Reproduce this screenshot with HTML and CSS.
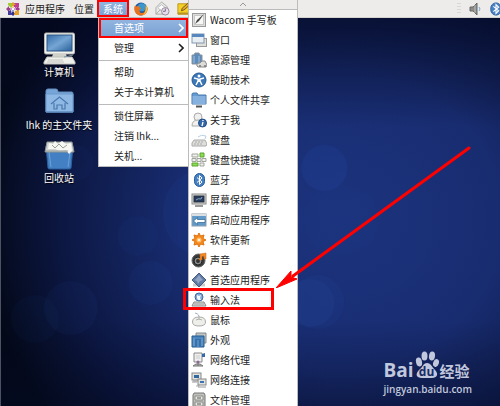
FILE: index.html
```html
<!DOCTYPE html>
<html lang="zh-CN">
<head>
<meta charset="utf-8">
<title>桌面</title>
<link rel="stylesheet" href="styles.css">
</head>
<body>
<header class="panel">
  <nav class="panel-menus">
    <svg class="distro" viewBox="0 0 16 16" width="16" height="16" aria-hidden="true">
      <g fill="#9b3c8e"><path d="M1 8l3-3v2h3v2H4v2z"/><rect x="9" y="2" width="4" height="4" fill="#b04896"/></g>
      <path d="M8 1l3 3H9v3H7V4H5z" fill="#e0a125"/>
      <path d="M15 8l-3 3V9H9V7h3V5z" fill="#a33b93"/>
      <path d="M8 15l-3-3h2V9h2v3h2z" fill="#33318c"/>
      <path d="M3 2h4v4l-1 1-3-3z" fill="#a5c936"/><path d="M10 7V5l2-3h2v4z" fill="#c53d8e"/>
      <path d="M3 14v-4l3-1 1 5z" fill="#453b9b"/><path d="M10 10l4-1v5H9z" fill="#e5a228"/>
      <path d="M8 5v6M5 8h6" stroke="#fff"/>
    </svg>
    <button class="panel-button">应用程序</button>
    <button class="panel-button">位置</button>
    <button class="panel-button active marked">系统</button>
  </nav>
  <div class="launchers">
    <svg viewBox="0 0 16 16" width="14" height="14" aria-hidden="true">
      <circle cx="8" cy="8" r="7.3" fill="#245a9c"/><circle cx="9" cy="6" r="4.5" fill="#3b97d0"/>
      <path d="M1 4l2 1 2-1 1 2 2 1-2 2 1 3c4 2 6-1 6-4l1-4c3 5 1 11-6 11.500C2 15-1 10 1 4z" fill="#e8731c"/>
      <path d="M14 4c3 5 0 10-4 11 3-3 4-7 3-11z" fill="#f7bd36"/>
    </svg>
    <svg viewBox="0 0 16 16" width="15" height="15" aria-hidden="true">
      <path d="M1 7l6-6 6 5v8H1z" fill="#e9e9e7" stroke="#aaa"/><path d="M3 7l4-3 4 3-4 4z" fill="#fff" stroke="#bbb"/>
      <path d="M1 14l5-5" stroke="#aaa"/><circle cx="11" cy="11" r="4" fill="#e5dfe9" stroke="#9685a2"/><path d="M11 8v3H8.500" fill="none" stroke="#756582"/>
    </svg>
    <svg viewBox="0 0 16 16" width="14" height="14" aria-hidden="true">
      <path d="M1 2h14v12H1z" fill="#f4cf24" stroke="#b79310"/><path d="M1 12h14v2H1z" fill="#b69524"/><path d="M5 10l1-3 7-6 2 2-7 6z" fill="#e9a72d" stroke="#665225"/>
    </svg>
  </div>
  <div class="tray">
    <span class="grip"></span>
    <svg viewBox="0 0 14 14" width="14" height="14" aria-hidden="true">
      <path d="M2 5h3l4-4v12L5 9H2z" fill="#8b8c88" stroke="#686966"/><path d="M7 3v8" stroke="#bbb"/><path d="M11 5q2 2 0 4" fill="none" stroke="#75a6d8"/>
    </svg>
    <svg viewBox="0 0 16 16" width="14" height="14" aria-hidden="true">
      <rect x="2" y="1" width="12" height="14" rx="6" fill="#4882c5" stroke="#2d619f"/><path d="M5 5l6 5-3 3V3l3 3-6 5" fill="none" stroke="#fff" stroke-width="1.300"/>
    </svg>
  </div>
</header>

<main class="desktop">
  <svg class="bubbles" viewBox="0 0 500 388" preserveAspectRatio="none" aria-hidden="true">
    <g fill="#315fc6">
      <circle cx="324" cy="150" r="23" opacity=".13"/><circle cx="137" cy="218" r="20" opacity=".05"/>
      <circle cx="150" cy="265" r="22" opacity=".07"/><circle cx="70" cy="290" r="27" opacity=".06"/>
      <circle cx="34" cy="301" r="24" opacity=".04"/><circle cx="310" cy="285" r="24" opacity=".1"/>
      <circle cx="317" cy="284" r="27" opacity=".06"/><circle cx="206" cy="195" r="44" opacity=".07"/>
      <circle cx="75" cy="145" r="18" opacity=".04"/>
    </g>
  </svg>
  <div class="shortcuts">
    <a class="shortcut" href="#computer">
      <svg viewBox="0 0 33 33" width="33" height="33" aria-hidden="true">
        <defs><linearGradient id="screen" x2="1" y2="1"><stop stop-color="#356da9"/><stop offset=".5" stop-color="#75a5d4"/><stop offset="1" stop-color="#286099"/></linearGradient></defs>
        <rect x="1.500" y="1" width="30" height="21" rx="1.500" fill="#f2f2ed" stroke="#b8b9b3"/>
        <rect x="4" y="3" width="25" height="16" fill="url(#screen)" stroke="#2a5484"/>
        <path d="M10 22h13l1 3H9z" fill="#d0d1cb"/><path d="M4 25h25l3 5v2H1v-2z" fill="#f0f0eb" stroke="#bfc0ba"/>
        <path d="M5 28h15M4 30h17" stroke="#c3c4bf"/><path d="M21 25q5-1 9-2" fill="none" stroke="#78909f"/>
      </svg>
      <span>计算机</span>
    </a>
    <a class="shortcut" href="#home">
      <svg viewBox="0 0 33 33" width="33" height="33" aria-hidden="true">
        <path d="M3 27V6q0-2 2-2h8q2 0 2 3h14q1 0 1 2v18z" fill="#78a5d7" stroke="#648fc2"/>
        <path d="M3 9h27v18H3z" fill="#8fb8e4" stroke="#6b9acd"/><path d="M3 27h27" stroke="#5683b8"/>
        <path d="M8 19l8.500-7 8.500 7M11 18v6h3v-4h5v4h3v-6" fill="none" stroke="#4878ad" stroke-width="1.200"/>
      </svg>
      <span>lhk 的主文件夹</span>
    </a>
    <a class="shortcut" href="#trash">
      <svg viewBox="0 0 33 33" width="33" height="33" aria-hidden="true">
        <path d="M3 8h27l-2 22q0 1-2 1H7q-2 0-2-1z" fill="#4380c3" stroke="#2b5e9d"/><path d="M6 14l2 15M27 14l-2 15" stroke="#6da0d6"/>
        <path d="M4 4h25l2 10H2z" fill="#ced3d2" stroke="#8d9594"/><path d="M5 11l1-6 4 1 2-3 3 3 4-3 4 3 5-1 1 8-3 3-3-4-6 1-5-2z" fill="#f6f6f3"/>
        <path d="M9 7l3 3 4-4 4 4 4-3M3 13h22" fill="none" stroke="#989f9b"/>
      </svg>
      <span>回收站</span>
    </a>
  </div>
  <div class="watermark">
    <div class="logo">
      <span class="brand">Bai</span>
      <span class="paw">
        <svg viewBox="0 0 24 28" width="24" height="28" aria-hidden="true">
          <g fill="#c1c8dd">
            <ellipse cx="4" cy="11" rx="3" ry="4.500" transform="rotate(-12 4 11)"/><ellipse cx="9.500" cy="5" rx="3" ry="4.500"/>
            <ellipse cx="17" cy="5" rx="3" ry="4.500" transform="rotate(8 17 5)"/><ellipse cx="21" cy="12" rx="2.800" ry="4" transform="rotate(20 21 12)"/>
            <path d="M12 12c4 0 5 4 8 7 4 4 2 8-3 8H7c-6 0-7-4-3-8 4-3 4-7 8-7z"/>
          </g>
        </svg>
        <span class="brand-du">du</span>
      </span>
      <span class="brand-cn">经验</span>
    </div>
    <div class="site">jingyan.baidu.com</div>
  </div>
</main>

<div class="menu system-menu" role="menu">
  <button class="item active marked">首选项<svg viewBox="0 0 6 10" width="6" height="10" aria-hidden="true"><path d="M1 1l4 4-4 4" fill="none" stroke="currentColor" stroke-width="1.600"/></svg></button>
  <button class="item">管理<svg viewBox="0 0 6 10" width="6" height="10" aria-hidden="true"><path d="M1 1l4 4-4 4" fill="none" stroke="currentColor" stroke-width="1.600"/></svg></button>
  <hr>
  <button class="item">帮助</button>
  <button class="item">关于本计算机</button>
  <hr>
  <button class="item">锁住屏幕</button>
  <button class="item">注销 lhk...</button>
  <button class="item">关机...</button>
</div>

<div class="menu preferences" role="menu">
  <button class="scroll-up" aria-label="向上滚动"><svg viewBox="0 0 8 5" width="8" height="5" aria-hidden="true"><path d="M1 4l3-3 3 3" fill="none" stroke="#999"/></svg></button>
  <button class="entry"><svg viewBox="0 0 16 16"><rect x="1.500" y="1.500" width="13" height="13" fill="#ddd" stroke="#999"/><rect x="3.500" y="3.500" width="9" height="9" fill="#f7f7f5" stroke="#c8c8c5"/><path d="M4 12l2-4 7-6-5 7z" fill="#444"/></svg>Wacom 手写板</button>
  <button class="entry"><svg viewBox="0 0 16 16"><rect x="5.500" y="6.500" width="10" height="8" fill="#dededb" stroke="#999"/><rect x="1" y="2" width="12" height="9" fill="#e9eef3" stroke="#8197b0"/><path d="M1 2h12v3H1z" fill="#5687bd"/></svg>窗口</button>
  <button class="entry"><svg viewBox="0 0 16 16"><path d="M1 3h2l1-2h4l1 2h2v9H1z" fill="#5e8bba" stroke="#89949e"/><path d="M3 4v7M8 4v7" stroke="#9fc2e3"/><path d="M6 14q-1-3 3-3l2-2h3l2 4-1 2H7z" fill="#dcdcda" stroke="#888"/><circle cx="9" cy="14" r="1" fill="#777"/><circle cx="14" cy="14" r="1" fill="#777"/></svg>电源管理</button>
  <button class="entry"><svg viewBox="0 0 16 16"><circle cx="8" cy="8" r="7" fill="#3c77b7" stroke="#255990"/><circle cx="8" cy="4" r="1.500" fill="#fff"/><path d="M3 6l4 1v2l-2 4M13 6L9 7v2l2 4M8 7v3" fill="none" stroke="#fff" stroke-width="1.500"/></svg>辅助技术</button>
  <button class="entry"><svg viewBox="0 0 16 16"><path d="M1 2q0-1 2-1h3l1 2h8v9H1z" fill="#669bd1" stroke="#4778ad"/><path d="M1.500 4h13v8h-13z" fill="#86b1df"/><path d="M5 14.500h6" stroke="#555" stroke-width="2"/></svg>个人文件共享</button>
  <button class="entry"><svg viewBox="0 0 16 16"><circle cx="7" cy="5" r="4" fill="#f0f0ee" stroke="#aaa"/><path d="M1 14q0-6 6-6t5 6z" fill="#f1f1ef" stroke="#aaa"/><circle cx="11.500" cy="11" r="4" fill="#3468a7" stroke="#214d86"/><path d="M12 10l-1 4M12 8v1" stroke="#fff" stroke-width="1.300"/></svg>关于我</button>
  <button class="entry"><svg viewBox="0 0 16 16"><path d="M7 5q3-3 8-1l-1 3" fill="none" stroke="#b5d0e8"/><path d="M3 8h11l2 4-1 2H1v-3z" fill="#dededb" stroke="#aaa"/><path d="M4 10h9M3 12h8" stroke="#aaa" stroke-dasharray="2 1"/></svg>键盘</button>
  <button class="entry"><svg viewBox="0 0 16 16"><g fill="#f0f0ec" stroke="#a2a59e"><path d="M1 2h6v3H1zM1 6.500h4v3H1zM6 6.500h4v3H6zM11 6.500h4v3h-4zM9 11h4v3H9z"/></g><g fill="#8bdd54" stroke="#5ca42e"><path d="M9 1h4v4H9zM1 11h6v3H1z"/></g></svg>键盘快捷键</button>
  <button class="entry"><svg viewBox="0 0 16 16"><rect x="3.500" y="1.500" width="10" height="13" rx="5" fill="#4580c2" stroke="#285d9b"/><path d="M6 5.500l5 4.500-2.500 2.500v-9L11 6l-5 4.500" fill="none" stroke="#fff"/></svg>蓝牙</button>
  <button class="entry"><svg viewBox="0 0 16 16"><rect x="1" y="2" width="14" height="10" fill="#dcdcda" stroke="#888"/><rect x="3" y="4" width="10" height="6" fill="#233b5d" stroke="#26303c"/><path d="M5 8q2-2 5-1l1-2" fill="none" stroke="#8fa6c3"/><path d="M4 14h8" stroke="#999" stroke-width="2"/></svg>屏幕保护程序</button>
  <button class="entry"><svg viewBox="0 0 16 16"><rect x="1" y="2" width="14" height="12" fill="#609aca" stroke="#8c9ead"/><path d="M1 2h14v2H1z" fill="#dbe0e3"/><path d="M2.500 9l4-3.500v2H14v3H6.500v2z" fill="#fff" stroke="#2b628f" stroke-width=".7"/></svg>启动应用程序</button>
  <button class="entry"><svg viewBox="0 0 16 16"><path d="M8 1l1.500 3L13 3l-1 3.500L15 8l-3 1.500 1 3.500-3.500-1L8 15l-1.500-3L3 13l1-3.500L1 8l3-1.500L3 3l3.500 1z" fill="#f58a20" stroke="#de7411"/><circle cx="8" cy="8" r="2.500" fill="#ffc069"/><circle cx="8" cy="8" r="1" fill="#fff"/></svg>软件更新</button>
  <button class="entry"><svg viewBox="0 0 16 16"><circle cx="7.500" cy="8.500" r="6.500" fill="#383b3c" stroke="#666"/><circle cx="7" cy="9" r="4" fill="#8b8d8c" stroke="#222"/><circle cx="7" cy="9" r="2" fill="#333"/><path d="M9 7V2l6-1v6h-2V4l-2 .5V8H8V7z" fill="#f28a26" stroke="#c9600e" stroke-width=".5"/></svg>声音</button>
  <button class="entry"><svg viewBox="0 0 16 16"><path d="M2 13h12" stroke="#ccc" stroke-width="3"/><path d="M8 1l7 7-7 7-7-7z" fill="#617aa4" stroke="#465d82"/><path d="M5 7l3-4 2 3 2 2-3 1-2 3-1-3-3-1z" fill="#92a5c4"/></svg>首选应用程序</button>
  <button class="entry target"><svg viewBox="0 0 16 16"><path d="M3 10h10l2 4H1z" fill="#dededc" stroke="#888"/><path d="M3 12h10" stroke="#999"/><circle cx="8" cy="5" r="4" fill="#83abd7" stroke="#41699c"/><path d="M6 3l2 1 2-1-1 3 1 2H7L6 6z" fill="#f6f9fc"/></svg>输入法</button>
  <button class="entry"><svg viewBox="0 0 16 16"><path d="M4 1q5 1 4 6" fill="none" stroke="#9ab0c3"/><path d="M1.500 10q0-5 6.500-5t6.500 5q0 4-6.500 4t-6.500-4z" fill="#eeeeeb" stroke="#aaaaa6"/><path d="M5 8q3-2 6 0M8 5v3" fill="none" stroke="#b3b3b0"/></svg>鼠标</button>
  <button class="entry"><svg viewBox="0 0 16 16"><path d="M5 1h10v10H5z" fill="#bfc4c4" stroke="#858a8b"/><path d="M1 4h12v11H1z" fill="#4d86be" stroke="#255a8f"/><path d="M4 7h6v8H4z" fill="#3771ab"/><path d="M3 6v8M7 8v7M11 6v8" stroke="#74a2d0"/></svg>外观</button>
  <button class="entry"><svg viewBox="0 0 16 16"><path d="M3 1h8v9H3z" fill="#eee" stroke="#888"/><path d="M5 4h4M5 6h4" stroke="#ccc"/><path d="M11 2l3-1v4h-3z" fill="#356ba5"/><path d="M7 9v5M2 14l3-2h4l3 2z" fill="#bbb" stroke="#777"/><circle cx="7" cy="10" r="1.500" fill="#8e6797"/></svg>网络代理</button>
  <button class="entry"><svg viewBox="0 0 16 16"><path d="M2 9h6v5H5" fill="none" stroke="#aaa"/><rect x="1" y="1" width="9" height="7" fill="#e2e2df" stroke="#888"/><path d="M3 3h5v3H3z" fill="#31699f"/><rect x="7" y="7" width="8" height="6" fill="#e2e2df" stroke="#888"/><path d="M9 9h4v2H9z" fill="#3c75b1"/><path d="M7 15h8M1 10h5" stroke="#999"/></svg>网络连接</button>
  <button class="entry"><svg viewBox="0 0 16 16"><path d="M3 1h10l1 2v12H2V3z" fill="#bfc1bd" stroke="#777"/><path d="M4 4h8v4H4zM4 10h8v4H4z" fill="#e8e9e5" stroke="#8a8c87"/><path d="M6 6h4M6 12h4" stroke="#555"/></svg>文件管理</button>
</div>

<svg class="arrow" viewBox="0 0 196 142" width="196" height="142" aria-hidden="true">
  <path d="M193 2L17 130" stroke="#f00" stroke-width="3" stroke-linecap="round"/>
  <path d="M0 142L15 125v6l6 2z" fill="#f00" stroke="#f00" stroke-linejoin="round"/>
</svg>
</body>
</html>
```

FILE: styles.css
```css
* { box-sizing: border-box; }

body {
  margin: 0;
  height: 100vh;
  display: flex;
  flex-direction: column;
  position: relative;
  overflow: hidden;
  font: 10px/14px "Noto Sans CJK SC", sans-serif;
  color: #222;
}

button {
  border: 0;
  padding: 0;
  background: none;
  color: inherit;
  font: inherit;
  text-align: left;
}

.panel {
  display: flex;
  align-items: center;
  height: 18px;
  flex: none;
  background: #edeceb;
  border-bottom: 1px solid #d5d3d0;
}

.panel-menus { display: flex; align-items: center; padding-left: 5px; }
.distro { margin-right: 4px; }
.panel-button { height: 17px; margin-right: 9px; white-space: nowrap; }
.panel-button.active { margin: 0 0 0 -6px; padding: 0 4px; }
.active { background: linear-gradient(#91b4df, #7ba2d3); color: #fff; }
.marked { border: 2px solid #f00; }

.launchers { display: flex; align-items: center; gap: 7px; margin-left: 5px; }

.tray { display: flex; align-items: center; gap: 7px; margin-left: auto; margin-right: -3px; }
.grip {
  width: 4px;
  height: 12px;
  background: repeating-linear-gradient(#d9d7d5 0 1px, transparent 1px 3px);
}

.desktop {
  position: relative;
  flex: 1;
  padding: 14px 9px;
  border-left: 1px solid #4c5262;
  background:
    linear-gradient(rgba(3, 8, 34, .65), transparent 28%),
    linear-gradient(transparent 78%, rgba(5, 12, 40, .4)),
    radial-gradient(ellipse 72% 85% at 68% 52%, #1c347f 0%, #182c70 45%, #0c1742 78%, #030817 100%);
}
.bubbles { position: absolute; inset: 0; width: 100%; height: 100%; }

.shortcuts {
  position: relative;
  display: flex;
  flex-direction: column;
  gap: 6px;
  width: 98px;
}
.shortcut {
  display: flex;
  flex-direction: column;
  align-items: center;
  color: #fff;
  text-decoration: none;
  text-shadow: 0 1px 1px #000;
  white-space: nowrap;
}

.menu {
  position: absolute;
  background: #fff;
  border: 1px solid #bcbcbc;
}
.system-menu { top: 17px; left: 98px; width: 91px; }
.system-menu hr { margin: 2px 0 1px; border: 0; border-top: 1px solid #bbb; }
.item {
  display: flex;
  align-items: center;
  justify-content: space-between;
  width: 100%;
  height: 20px;
  padding: 0 4px 0 15px;
}
.item.marked { padding: 0 2px 0 13px; }

.preferences { top: 0; left: 188px; width: 110px; border-width: 0 1px; }
.scroll-up {
  display: flex;
  align-items: center;
  justify-content: center;
  width: 100%;
  height: 10px;
  background: #edeceb;
  border-bottom: 1px solid #bbb;
}
.entry {
  position: relative;
  display: flex;
  align-items: center;
  gap: 3px;
  width: 100%;
  height: 20px;
  padding-left: 2px;
  white-space: nowrap;
}
.entry svg { width: 16px; height: 16px; flex: none; }
.target::after {
  content: "";
  position: absolute;
  inset: -2px 23px 0 -6px;
  border: 3px solid #f00;
}

.arrow { position: absolute; left: 276px; top: 146px; pointer-events: none; }

.watermark {
  position: absolute;
  right: 28px;
  bottom: 10px;
  color: #c1c8dd;
}
.logo { display: flex; align-items: flex-end; gap: 1px; height: 30px; }
.brand { font: 700 19px/24px "Open Sans", sans-serif; }
.paw { position: relative; display: flex; padding-bottom: 3px; }
.brand-du {
  position: absolute;
  inset: auto 0 3px;
  font: 700 12px/14px "Open Sans", sans-serif;
  color: #192b66;
  text-align: center;
}
.brand-cn { font: 700 15px/22px "Noto Sans CJK SC", sans-serif; }
.site { font: 600 10px/14px "Open Sans", sans-serif; white-space: nowrap; }
```
